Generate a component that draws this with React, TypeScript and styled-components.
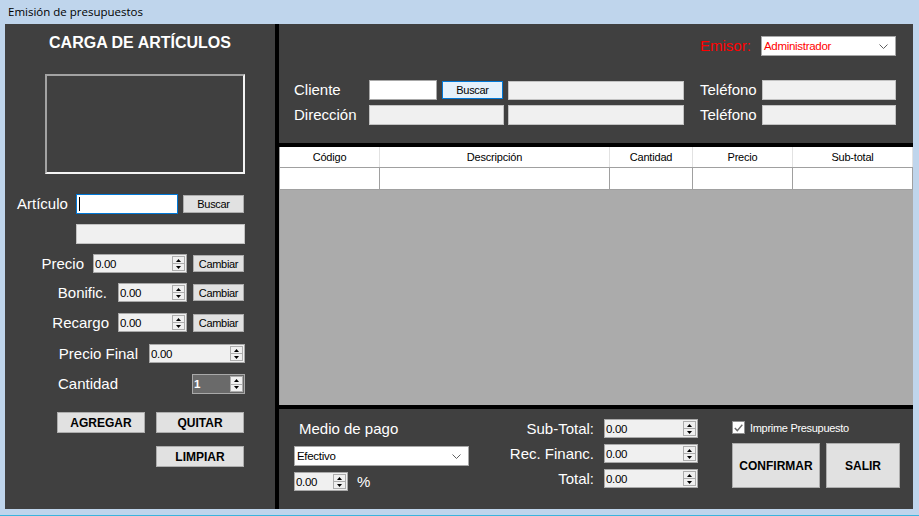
import React from "react";
import styled, { createGlobalStyle } from "styled-components";

const GlobalStyle = createGlobalStyle`
  * { box-sizing: border-box; }
  html, body { margin: 0; padding: 0; }
  body {
    background: #bfd5ec;
    font-family: "Liberation Sans", Arial, sans-serif;
    overflow: hidden;
  }
`;

const Window = styled.div`
  width: 919px;
  height: 516px;
  background: #bfd5ec;
  border-bottom: 1px solid #3ab4dd;
  display: flex;
  flex-direction: column;
`;

const TitleBar = styled.div`
  height: 24px;
  padding: 4px 0 0 8px;
  font-family: "Open Sans", "Noto Sans", sans-serif;
  font-size: 11.5px;
  line-height: 16px;
  color: #000;
`;

const Frame = styled.div`
  margin-left: 5px;
  width: 908px;
  height: 485px;
  background: #000;
  display: grid;
  grid-template-columns: 270px 634px;
  column-gap: 4px;
`;

const Panel = styled.div`
  background: #404040;
  color: #fff;
  display: flex;
  flex-direction: column;
`;

const RightColumn = styled.div`
  display: grid;
  grid-template-rows: 119px 258px 100px;
  row-gap: 4px;
`;

const PanelTitle = styled.div`
  margin-top: 9px;
  height: 20px;
  line-height: 20px;
  text-align: center;
  font-size: 16px;
  font-weight: 700;
  color: #fff;
`;

const PictureBox = styled.div`
  margin: 21px 0 0 40px;
  width: 200px;
  height: 100px;
  border: 2px solid #a3a3a3;
  border-right-color: #f4f4f4;
  border-bottom-color: #f4f4f4;
`;

const Row = styled.div<{ $mt: number; $h: number }>`
  display: flex;
  align-items: center;
  flex-shrink: 0;
  margin-top: ${(p) => p.$mt}px;
  height: ${(p) => p.$h}px;
`;

const Label = styled.div<{
  $w?: number;
  $ml?: number;
  $pl?: number;
  $align?: "left" | "right";
  $color?: string;
}>`
  flex-shrink: 0;
  width: ${(p) => (p.$w ? `${p.$w}px` : "auto")};
  margin-left: ${(p) => p.$ml ?? 0}px;
  padding-left: ${(p) => p.$pl ?? 0}px;
  text-align: ${(p) => p.$align ?? "left"};
  font-size: 15px;
  line-height: 18px;
  color: ${(p) => p.$color ?? "#fff"};
  white-space: nowrap;
`;

type BoxVariant = "white" | "disabled" | "focus";

const TextBox = styled.div<{ $w: number; $h?: number; $ml?: number; $variant?: BoxVariant }>`
  flex-shrink: 0;
  width: ${(p) => p.$w}px;
  height: ${(p) => p.$h ?? 20}px;
  margin-left: ${(p) => p.$ml ?? 0}px;
  background: ${(p) => (p.$variant === "disabled" ? "#f0f0f0" : "#fff")};
  border: 1px solid
    ${(p) =>
      p.$variant === "focus" ? "#0078d7" : p.$variant === "disabled" ? "#c2c2c2" : "#a8a8a8"};
  display: flex;
  align-items: center;
  padding-left: 2px;
`;

const Caret = styled.span`
  width: 1px;
  height: 14px;
  background: #000;
`;

const Btn = styled.div<{ $w: number; $h: number; $ml?: number; $bold?: boolean; $focus?: boolean }>`
  flex-shrink: 0;
  width: ${(p) => p.$w}px;
  height: ${(p) => p.$h}px;
  margin-left: ${(p) => p.$ml ?? 0}px;
  background: ${(p) => (p.$focus ? "#e5f1fb" : "#e1e1e1")};
  border: 1px solid ${(p) => (p.$focus ? "#0078d7" : "#adadad")};
  display: flex;
  align-items: center;
  justify-content: center;
  color: #000;
  font-size: ${(p) => (p.$bold ? 12 : 11)}px;
  font-weight: ${(p) => (p.$bold ? 700 : 400)};
  letter-spacing: ${(p) => (p.$bold ? "0" : "-0.3px")};
  white-space: nowrap;
`;

const NudBox = styled.div<{ $w: number; $h: number; $ml?: number; $dark?: boolean }>`
  flex-shrink: 0;
  width: ${(p) => p.$w}px;
  height: ${(p) => p.$h}px;
  margin-left: ${(p) => p.$ml ?? 0}px;
  background: ${(p) => (p.$dark ? "#6a6a6a" : "#f0f0f0")};
  border: 1px solid #a9a9a9;
  display: flex;
  align-items: center;
  justify-content: space-between;
`;

const NudValue = styled.span<{ $dark?: boolean }>`
  padding-left: 1px;
  font-size: 11.5px;
  letter-spacing: -0.3px;
  color: ${(p) => (p.$dark ? "#fff" : "#000")};
  font-weight: ${(p) => (p.$dark ? 700 : 400)};
`;

const Spinner = styled.div`
  width: 13px;
  height: calc(100% - 2px);
  margin-right: 1px;
  border: 1px solid #adadad;
  background: #f0f0f0;
  display: flex;
  flex-direction: column;
`;

const SpinHalf = styled.div<{ $top?: boolean }>`
  flex: 1;
  display: flex;
  align-items: center;
  justify-content: center;
  border-bottom: ${(p) => (p.$top ? "1px solid #adadad" : "none")};
`;

const Nud = ({
  w,
  h = 19,
  ml,
  value,
  dark,
}: {
  w: number;
  h?: number;
  ml?: number;
  value: string;
  dark?: boolean;
}) => (
  <NudBox $w={w} $h={h} $ml={ml} $dark={dark}>
    <NudValue $dark={dark}>{value}</NudValue>
    <Spinner>
      <SpinHalf $top>
        <svg width="5" height="3" viewBox="0 0 5 3">
          <path d="M0 3 L2.5 0 L5 3 Z" fill="#000" />
        </svg>
      </SpinHalf>
      <SpinHalf>
        <svg width="5" height="3" viewBox="0 0 5 3">
          <path d="M0 0 L5 0 L2.5 3 Z" fill="#000" />
        </svg>
      </SpinHalf>
    </Spinner>
  </NudBox>
);

const ComboBox = styled.div<{ $w: number; $mt?: number; $color?: string }>`
  flex-shrink: 0;
  width: ${(p) => p.$w}px;
  height: 20px;
  margin-top: ${(p) => p.$mt ?? 0}px;
  background: #fff;
  border: 1px solid #a8a8a8;
  display: flex;
  align-items: center;
  justify-content: space-between;
  padding: 0 7px 0 2px;
  color: ${(p) => p.$color ?? "#000"};
  font-size: 11.5px;
  letter-spacing: -0.3px;
`;

const Chevron = () => (
  <svg width="9" height="5" viewBox="0 0 9 5">
    <polyline points="0.5,0.5 4.5,4.5 8.5,0.5" fill="none" stroke="#606060" strokeWidth="1" />
  </svg>
);

/* table */
const TableArea = styled.div`
  background: #ababab;
  border-left: 1px solid #a0a0a0;
  display: flex;
  flex-direction: column;
`;

const TableRow = styled.div<{ $h: number }>`
  display: grid;
  grid-template-columns: 100px 230px 83px 100px 120px;
  height: ${(p) => p.$h}px;
  background: #fff;
  border-bottom: 1px solid #a0a0a0;
`;

const Cell = styled.div<{ $header?: boolean }>`
  border-right: 1px solid ${(p) => (p.$header ? "#e2e2e2" : "#a0a0a0")};
  display: flex;
  align-items: center;
  justify-content: center;
  font-size: 11px;
  letter-spacing: -0.2px;
  color: #000;
`;

/* bottom panel */
const BottomPanel = styled(Panel)`
  flex-direction: row;
  align-items: flex-start;
`;

const PayColumn = styled.div`
  padding: 10px 0 0 15px;
  width: 190px;
  display: flex;
  flex-direction: column;
`;

const PayTitle = styled.div`
  margin-left: 5px;
  height: 20px;
  line-height: 20px;
  font-size: 15px;
  color: #fff;
`;

const TotalsGrid = styled.div`
  margin-left: 31px;
  padding-top: 10px;
  display: grid;
  grid-template-columns: 94px 94px;
  grid-auto-rows: 19px;
  column-gap: 10px;
  row-gap: 6px;
  align-items: center;
`;

const ActionColumn = styled.div`
  margin-left: 34px;
  padding-top: 12px;
  display: flex;
  flex-direction: column;
`;

const CheckRow = styled.div`
  display: flex;
  align-items: center;
  height: 13px;
`;

const CheckBox = styled.div`
  width: 13px;
  height: 13px;
  background: #fff;
  border: 1px solid #8f8f8f;
  display: flex;
  align-items: center;
  justify-content: center;
`;

const CheckLabel = styled.span`
  margin-left: 5px;
  font-size: 11px;
  letter-spacing: -0.3px;
  color: #fff;
`;

const ActionButtons = styled.div`
  margin-top: 9px;
  display: flex;
`;

export default function App() {
  return (
    <>
      <GlobalStyle />
      <Window>
        <TitleBar>Emisión de presupuestos</TitleBar>
        <Frame>
          <Panel>
            <PanelTitle>CARGA DE ARTÍCULOS</PanelTitle>
            <PictureBox />
            <Row $mt={20} $h={20}>
              <Label $w={71} $pl={12}>
                Artículo
              </Label>
              <TextBox $w={102} $variant="focus">
                <Caret />
              </TextBox>
              <Btn $w={61} $h={18} $ml={5}>
                Buscar
              </Btn>
            </Row>
            <Row $mt={10} $h={20}>
              <TextBox $w={169} $ml={71} $variant="disabled" />
            </Row>
            <Row $mt={10} $h={19}>
              <Label $w={79} $align="right">
                Precio
              </Label>
              <Nud w={94} ml={9} value="0.00" />
              <Btn $w={51} $h={17} $ml={6}>
                Cambiar
              </Btn>
            </Row>
            <Row $mt={10} $h={19}>
              <Label $w={102} $align="right">
                Bonific.
              </Label>
              <Nud w={69} ml={11} value="0.00" />
              <Btn $w={51} $h={17} $ml={6}>
                Cambiar
              </Btn>
            </Row>
            <Row $mt={11} $h={19}>
              <Label $w={104} $align="right">
                Recargo
              </Label>
              <Nud w={69} ml={9} value="0.00" />
              <Btn $w={51} $h={18} $ml={6}>
                Cambiar
              </Btn>
            </Row>
            <Row $mt={12} $h={19}>
              <Label $w={133} $align="right">
                Precio Final
              </Label>
              <Nud w={96} ml={11} value="0.00" />
            </Row>
            <Row $mt={11} $h={20}>
              <Label $w={187} $pl={53}>
                Cantidad
              </Label>
              <Nud w={53} h={20} value="1" dark />
            </Row>
            <Row $mt={18} $h={21}>
              <Btn $w={88} $h={21} $ml={52} $bold>
                AGREGAR
              </Btn>
              <Btn $w={88} $h={21} $ml={11} $bold>
                QUITAR
              </Btn>
            </Row>
            <Row $mt={13} $h={21}>
              <Btn $w={88} $h={21} $ml={151} $bold>
                LIMPIAR
              </Btn>
            </Row>
          </Panel>

          <RightColumn>
            <Panel>
              <Row $mt={12} $h={20}>
                <Label $ml={421} $w={61} $color="#ff0000">
                  Emisor:
                </Label>
                <ComboBox $w={135} $color="#ff0000">
                  Administrador
                  <Chevron />
                </ComboBox>
              </Row>
              <Row $mt={24} $h={20}>
                <Label $ml={15} $w={75}>
                  Cliente
                </Label>
                <TextBox $w={68} />
                <Btn $w={61} $h={18} $ml={5} $focus>
                  Buscar
                </Btn>
                <TextBox $w={176} $h={19} $ml={5} $variant="disabled" />
                <Label $ml={16} $w={62}>
                  Teléfono
                </Label>
                <TextBox $w={134} $variant="disabled" />
              </Row>
              <Row $mt={5} $h={20}>
                <Label $ml={15} $w={75}>
                  Dirección
                </Label>
                <TextBox $w={135} $variant="disabled" />
                <TextBox $w={176} $ml={4} $variant="disabled" />
                <Label $ml={16} $w={62}>
                  Teléfono
                </Label>
                <TextBox $w={134} $variant="disabled" />
              </Row>
            </Panel>

            <TableArea>
              <TableRow $h={21}>
                <Cell $header>Código</Cell>
                <Cell $header>Descripción</Cell>
                <Cell $header>Cantidad</Cell>
                <Cell $header>Precio</Cell>
                <Cell $header>Sub-total</Cell>
              </TableRow>
              <TableRow $h={22}>
                <Cell />
                <Cell />
                <Cell />
                <Cell />
                <Cell />
              </TableRow>
            </TableArea>

            <BottomPanel>
              <PayColumn>
                <PayTitle>Medio de pago</PayTitle>
                <ComboBox $w={175} $mt={7}>
                  Efectivo
                  <Chevron />
                </ComboBox>
                <Row $mt={6} $h={19}>
                  <Nud w={54} value="0.00" />
                  <Label $ml={9}>%</Label>
                </Row>
              </PayColumn>
              <TotalsGrid>
                <Label $align="right">Sub-Total:</Label>
                <Nud w={94} value="0.00" />
                <Label $align="right">Rec. Financ.</Label>
                <Nud w={94} value="0.00" />
                <Label $align="right">Total:</Label>
                <Nud w={94} value="0.00" />
              </TotalsGrid>
              <ActionColumn>
                <CheckRow>
                  <CheckBox>
                    <svg width="9" height="8" viewBox="0 0 9 8">
                      <polyline
                        points="0.8,4 3.3,6.6 8.3,0.8"
                        fill="none"
                        stroke="#6b6b6b"
                        strokeWidth="1.4"
                      />
                    </svg>
                  </CheckBox>
                  <CheckLabel>Imprime Presupuesto</CheckLabel>
                </CheckRow>
                <ActionButtons>
                  <Btn $w={88} $h={45} $bold>
                    CONFIRMAR
                  </Btn>
                  <Btn $w={74} $h={45} $ml={6} $bold>
                    SALIR
                  </Btn>
                </ActionButtons>
              </ActionColumn>
            </BottomPanel>
          </RightColumn>
        </Frame>
      </Window>
    </>
  );
}
